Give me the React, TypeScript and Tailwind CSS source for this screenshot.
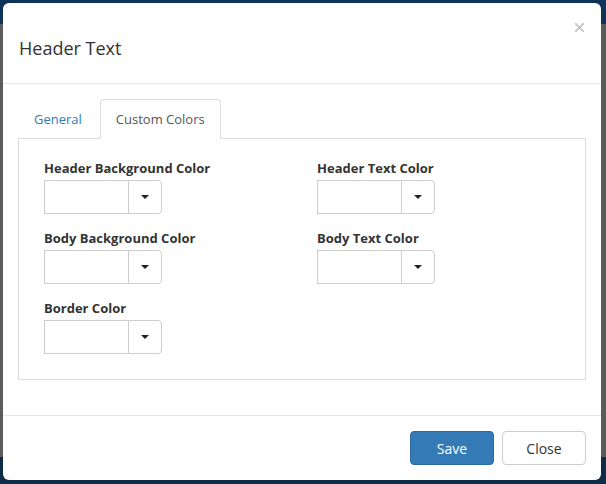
import React from "react";

function ColorPicker() {
  return (
    <div className="flex h-[34px] w-[118px]">
      <div className="h-full w-[84px] border border-r-0 border-[#ccc] bg-white" />
      <div className="flex h-full w-[34px] items-center justify-center rounded-r-[4px] border border-[#ccc] bg-white">
        <span className="block h-0 w-0 border-x-[4px] border-t-[4px] border-x-transparent border-t-[#222]" />
      </div>
    </div>
  );
}

function Field({ label }: { label: string }) {
  return (
    <div className="flex flex-col">
      <div className="mb-[3px] text-[13px] font-bold leading-[18px] text-[#333]">{label}</div>
      <ColorPicker />
    </div>
  );
}

export default function App() {
  return (
    <div
      className="h-[484px] w-[606px] overflow-hidden bg-[linear-gradient(to_bottom,#0f3358_0px,#0f3358_24px,#5b5b5b_24px,#5b5b5b_457px,#0e2b47_457px)] p-[3px]"
      style={{ fontFamily: "'Open Sans', 'Liberation Sans', sans-serif" }}
    >
      <div className="flex h-[477px] w-[598px] flex-col rounded-[6px] bg-white">
        {/* Header */}
        <div className="flex h-[81px] items-start justify-between border-b border-[#e5e5e5] pl-[16px] pr-[17px]">
          <div className="mt-[35px] text-[18px] leading-[20px] text-[#333]">Header Text</div>
          <svg className="mt-[20px]" width="9" height="9" viewBox="0 0 9 9">
            <path d="M0.8 0.8 L8.2 8.2 M8.2 0.8 L0.8 8.2" stroke="#c4c4c4" strokeWidth="1.8" strokeLinecap="square" />
          </svg>
        </div>

        {/* Body */}
        <div className="px-[15px] pb-[35px] pt-[15px]">
          <div className="flex h-[40px] border-b border-[#ddd]">
            <div className="-mb-px mr-[2px] h-[40px] border border-transparent px-[15px] py-[10px] text-[13px] leading-[18px] text-[#337ab7]">
              General
            </div>
            <div className="-mb-px h-[40px] rounded-t-[4px] border border-[#ddd] border-b-white bg-white px-[15px] py-[10px] text-[13px] leading-[18px] text-[#555]">
              Custom Colors
            </div>
          </div>
          <div className="h-[241px] border border-t-0 border-[#ddd] pl-[25px] pt-[20px]">
            <div className="grid grid-cols-[273px_1fr] gap-y-[15px]">
              <Field label="Header Background Color" />
              <Field label="Header Text Color" />
              <Field label="Body Background Color" />
              <Field label="Body Text Color" />
              <Field label="Border Color" />
            </div>
          </div>
        </div>

        {/* Footer */}
        <div className="flex justify-end gap-[8px] border-t border-[#e5e5e5] px-[15px] pb-[15px] pt-[15px]">
          <button className="h-[34px] w-[84px] rounded-[4px] border border-[#2e6da4] bg-[#337ab7] text-[14px] text-white">
            Save
          </button>
          <button className="h-[34px] w-[84px] rounded-[4px] border border-[#ccc] bg-white text-[14px] text-[#333]">
            Close
          </button>
        </div>
      </div>
    </div>
  );
}
